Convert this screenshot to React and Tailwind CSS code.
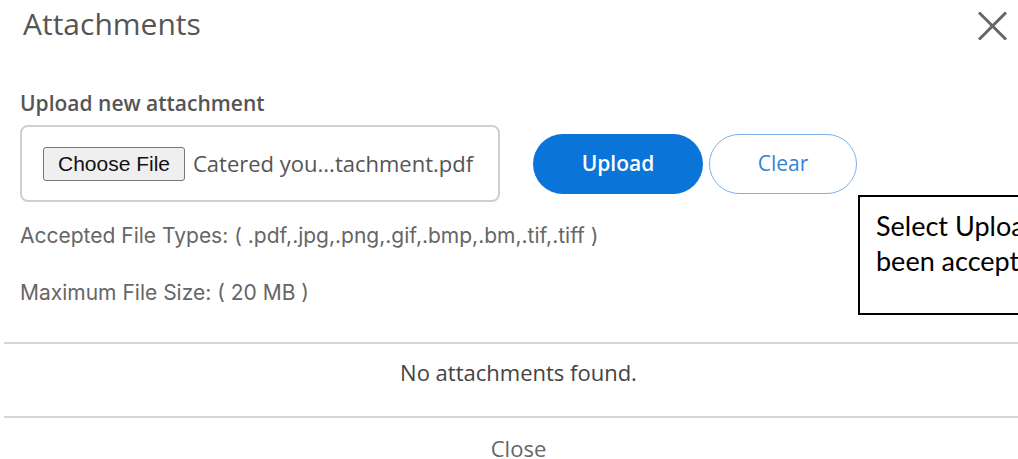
export default function App() {
  return (
    <div className="relative flex h-[459px] w-[1018px] flex-col overflow-hidden bg-white font-['Open_Sans',sans-serif]">
      {/* dialog header */}
      <div className="flex h-[42px] items-start justify-between pl-[23px] pr-[11px] pt-[9px]">
        <h2 className="text-[30px] font-normal leading-[30px] text-[#555]">Attachments</h2>
        <button aria-label="Close dialog" className="mt-[3px] h-[28px] w-[29px]">
          <svg width="29" height="28" viewBox="0 0 29 28" fill="none">
            <path d="M2 1.5 L27 26.5 M27 1.5 L2 26.5" stroke="#666" strokeWidth="3" strokeLinecap="square" />
          </svg>
        </button>
      </div>

      {/* upload form */}
      <div className="px-[20px]">
        <p className="mt-[51px] text-[21px] font-semibold leading-[21px] text-[#555]">Upload new attachment</p>
        <div className="mt-[11px] flex items-center">
          <div className="flex h-[77px] w-[480px] items-center rounded-[8px] border-2 border-[#cfcfcf] pl-[21px]">
            <span className="flex h-[34px] w-[142px] items-center justify-center rounded-[3px] border border-[#767676] bg-[#efefef] font-['Liberation_Sans',Arial,sans-serif] text-[21px] text-[#111]">
              Choose File
            </span>
            <span className="ml-[8px] text-[22px] text-[#555]">Catered you...tachment.pdf</span>
          </div>
          <button className="ml-[33px] h-[60px] w-[170px] rounded-full bg-[#0b74d9] text-[21px] font-semibold text-white">
            Upload
          </button>
          <button className="ml-[6px] h-[60px] w-[148px] rounded-full border-[1.5px] border-[#7fb0e6] bg-white text-[21px] text-[#3583d5]">
            Clear
          </button>
        </div>
        <p className="mt-[23px] font-['Inter',sans-serif] text-[21px] leading-[21px] text-[#666]">
          Accepted File Types: ( .pdf,.jpg,.png,.gif,.bmp,.bm,.tif,.tiff )
        </p>
        <p className="mt-[36px] font-['Inter',sans-serif] text-[21px] leading-[21px] text-[#666]">
          Maximum File Size: ( 20 MB )
        </p>
      </div>

      {/* attachment list */}
      <div className="ml-[4px] mt-[39px] h-[2px] bg-[#d5d5d5]" />
      <p className="mt-[17px] pl-[19px] text-center text-[22px] leading-[22px] text-[#444]">No attachments found.</p>
      <div className="ml-[4px] mt-[33px] h-[2px] bg-[#d5d5d5]" />
      <p className="mt-[19px] pl-[19px] text-center text-[22px] leading-[22px] text-[#666]">Close</p>

      {/* annotation callout */}
      <div className="absolute left-[858px] top-[195px] h-[120px] w-[320px] whitespace-nowrap border-2 border-black pl-[16px] pt-[11px] font-['Lato',sans-serif] text-[27px] leading-[35px] text-black">
        Select Upload once the file has
        <br />
        been accepted.
      </div>
    </div>
  );
}
